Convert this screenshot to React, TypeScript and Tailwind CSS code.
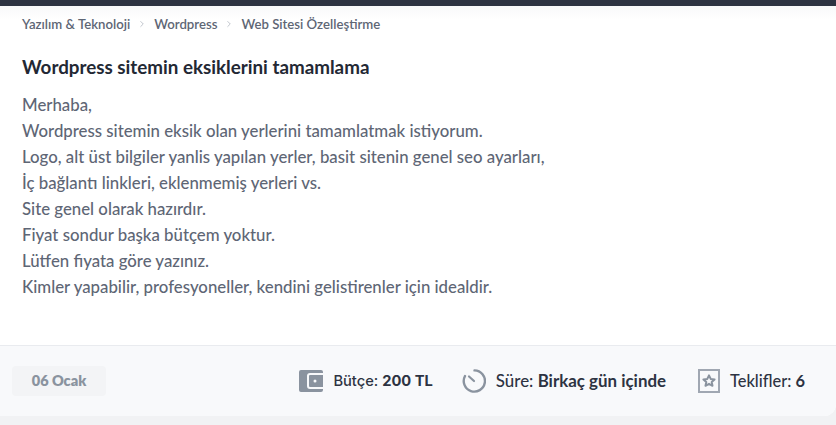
import React from 'react';
import { ChevronRight } from 'lucide-react';

const crumbs = ['Yazılım & Teknoloji', 'Wordpress', 'Web Sitesi Özelleştirme'];

const lines = [
  'Merhaba,',
  'Wordpress sitemin eksik olan yerlerini tamamlatmak istiyorum.',
  'Logo, alt üst bilgiler yanlis yapılan yerler, basit sitenin genel seo ayarları,',
  'İç bağlantı linkleri, eklenmemiş yerleri vs.',
  'Site genel olarak hazırdır.',
  'Fiyat sondur başka bütçem yoktur.',
  'Lütfen fiyata göre yazınız.',
  'Kimler yapabilir, profesyoneller, kendini gelistirenler için idealdir.',
];

const WalletIcon = () => (
  <svg width="24" height="24" viewBox="0 0 24 24" className="shrink-0">
    <path
      fill="#8a939f"
      d="M2 1h20a2 2 0 0 1 2 2v1H11a3 3 0 0 0-3 3v10a3 3 0 0 0 3 3h13v1a2 2 0 0 1-2 2H2a2 2 0 0 1-2-2V3a2 2 0 0 1 2-2z"
    />
    <path
      fillRule="evenodd"
      fill="#8a939f"
      d="M11 6h13v12H11a1 1 0 0 1-1-1V7a1 1 0 0 1 1-1zm5 4.5a1.5 1.5 0 1 0 0 3 1.5 1.5 0 0 0 0-3z"
    />
  </svg>
);

const TimerIcon = () => (
  <svg width="24" height="24" viewBox="0 0 24 24" fill="none" className="shrink-0">
    <path
      d="M12.5 1.4A10.6 10.6 0 1 1 3 7"
      stroke="#8a939f"
      strokeWidth="2.4"
      strokeLinecap="round"
    />
    <path d="M7 7.5 12 12" stroke="#8a939f" strokeWidth="2.2" strokeLinecap="round" />
  </svg>
);

const StarBoxIcon = () => (
  <svg width="22" height="24" viewBox="0 0 22 24" fill="none" className="shrink-0">
    <rect x="1" y="1" width="20" height="22" stroke="#a0a7b2" strokeWidth="2" />
    <path
      d="M11 6.4l1.7 3.5 3.9.5-2.9 2.6.8 3.8-3.5-2-3.5 2 .8-3.8-2.9-2.6 3.9-.5z"
      stroke="#8a939f"
      strokeWidth="2"
      strokeLinejoin="round"
    />
  </svg>
);

export default function App() {
  return (
    <div className="h-[425px] w-[836px] overflow-hidden bg-[#f1f2f4] font-['Lato',sans-serif]">
      <div className="h-[6px] bg-[#2d3342]" />
      <div className="rounded-br-xl bg-white">
        <div className="h-[339px] bg-gradient-to-b from-[#f8f9fa] to-white to-[14px] px-[22px] pt-[10px]">
          <nav className="flex items-center text-[13.2px] leading-[16px] font-semibold text-[#5e6675]">
            {crumbs.map((c, i) => (
              <React.Fragment key={c}>
                {i > 0 && <ChevronRight className="mx-[7px] h-[10px] w-[10px] text-[#b5bac3]" strokeWidth={2} />}
                <span>{c}</span>
              </React.Fragment>
            ))}
          </nav>
          <h1 className="mt-[23px] text-[18.8px] leading-[24px] font-bold text-[#232834]">
            Wordpress sitemin eksiklerini tamamlama
          </h1>
          <div className="mt-[13px] text-[16.8px] leading-[26px] font-medium text-[#5e6675]">
            {lines.map((l) => (
              <p key={l}>{l}</p>
            ))}
          </div>
        </div>
        <div className="flex h-[71px] items-center justify-between rounded-br-xl border-t border-[#e9ebef] bg-[#f8f9fb] pl-3 pr-[31px]">
          <div className="flex h-[30px] w-[94px] items-center justify-center rounded bg-[#f3f4f6] text-[14.5px] font-extrabold text-[#8a939f]">
            06 Ocak
          </div>
          <div className="flex items-center text-[#2d3342]">
            <div className="flex items-center gap-[10px]">
              <WalletIcon />
              <span className="font-['Inter',sans-serif] text-[14.7px] font-medium">
                Bütçe: <b className="font-bold">200 TL</b>
              </span>
            </div>
            <div className="ml-[29px] flex items-center gap-[10px]">
              <TimerIcon />
              <span className="text-[16.9px] font-medium">
                Süre: <b className="font-bold">Birkaç gün içinde</b>
              </span>
            </div>
            <div className="ml-[32px] flex items-center gap-[10px]">
              <StarBoxIcon />
              <span className="text-[16.4px] font-medium">
                Teklifler: <b className="font-bold">6</b>
              </span>
            </div>
          </div>
        </div>
      </div>
    </div>
  );
}
